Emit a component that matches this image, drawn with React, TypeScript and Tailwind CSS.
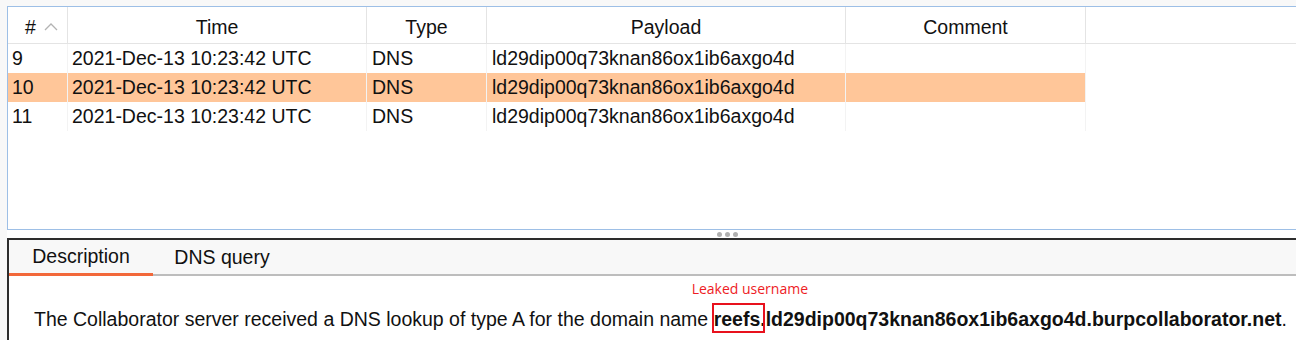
import { useState } from 'react';

type Interaction = {
  id: number;
  time: string;
  type: string;
  payload: string;
  comment: string;
};

const rows: Interaction[] = [
  { id: 9, time: '2021-Dec-13 10:23:42 UTC', type: 'DNS', payload: 'ld29dip00q73knan86ox1ib6axgo4d', comment: '' },
  { id: 10, time: '2021-Dec-13 10:23:42 UTC', type: 'DNS', payload: 'ld29dip00q73knan86ox1ib6axgo4d', comment: '' },
  { id: 11, time: '2021-Dec-13 10:23:42 UTC', type: 'DNS', payload: 'ld29dip00q73knan86ox1ib6axgo4d', comment: '' },
];

const cols = 'grid grid-cols-[60px_299px_120px_359px_240px_1fr]';

function SortChevron() {
  return (
    <svg width="14" height="9" viewBox="0 0 14 9" className="ml-[8px] -mt-[2px]">
      <polyline points="1,8 7,2 13,8" fill="none" stroke="#b3b3b3" strokeWidth="1.3" />
    </svg>
  );
}

function HeaderCell({ children, last }: { children?: React.ReactNode; last?: boolean }) {
  return (
    <div
      className={`flex items-center justify-center h-full pt-[5px] ${last ? '' : 'border-r border-[#e4e4e4]'}`}
    >
      {children}
    </div>
  );
}

export default function App() {
  const [selected, setSelected] = useState(10);
  const [tab, setTab] = useState('Description');

  return (
    <div className="w-[1296px] h-[340px] overflow-hidden bg-[#f8f8f8] pt-[6px] pl-[7px] text-[19.5px] text-[#111] font-['Liberation_Sans',Arial,sans-serif]">
      {/* interactions table */}
      <div className="h-[224px] bg-white border border-r-0 border-[#9dbfe6]">
        <div className={`${cols} h-[37px] border-b border-[#e4e4e4]`}>
          <HeaderCell>
            <span className="pl-[8px]">#</span>
            <SortChevron />
          </HeaderCell>
          <HeaderCell>Time</HeaderCell>
          <HeaderCell>Type</HeaderCell>
          <HeaderCell>Payload</HeaderCell>
          <HeaderCell>Comment</HeaderCell>
          <HeaderCell last />
        </div>
        {rows.map((r) => {
          const sel = r.id === selected;
          const cell = `flex items-center h-[29px] border-r border-[#f3f3f3] ${sel ? 'bg-[#ffc699]' : ''}`;
          return (
            <div key={r.id} className={`${cols} cursor-default`} onClick={() => setSelected(r.id)}>
              <div className={`${cell} pl-[4px]`}>{r.id}</div>
              <div className={`${cell} pl-[4px]`}>{r.time}</div>
              <div className={`${cell} pl-[5px]`}>{r.type}</div>
              <div className={`${cell} pl-[5px]`}>{r.payload}</div>
              <div className={`${cell} pl-[5px]`}>{r.comment}</div>
              <div className="h-[29px]" />
            </div>
          );
        })}
      </div>

      {/* split handle */}
      <div className="h-[8px] bg-white flex items-center justify-center gap-[3px] pl-[152px]">
        <span className="w-[5px] h-[5px] rounded-full bg-[#b0b0b0]" />
        <span className="w-[5px] h-[5px] rounded-full bg-[#b0b0b0]" />
        <span className="w-[5px] h-[5px] rounded-full bg-[#b0b0b0]" />
      </div>

      {/* details panel */}
      <div className="h-[102px] border-t-2 border-l-2 border-[#2d2d2d] bg-white">
        <div className="flex h-[36px] bg-[#f8f8f8] border-b-2 border-[#bdbdbd]">
          {['Description', 'DNS query'].map((t) => (
            <button
              key={t}
              onClick={() => setTab(t)}
              className={`h-[36px] -mb-[2px] flex items-center justify-center ${
                t === 'Description' ? 'w-[144px]' : 'w-[138px]'
              } ${tab === t ? 'border-b-[3px] border-[#f2683a]' : ''}`}
            >
              {t}
            </button>
          ))}
        </div>
        <div className="pl-[25px] pt-[31px] leading-[24px] whitespace-nowrap">
          The Collaborator server received a DNS lookup of type A for the domain name{' '}
          <span className="relative font-bold">
            <span className="absolute -left-[2px] -right-[5px] -top-[5px] -bottom-[3px] border-2 border-[#e8111d]" />
            <span className="absolute -top-[28px] -left-[22px] text-[14px] leading-[18px] font-normal text-[#ee1c25] font-['Open_Sans',sans-serif]">
              Leaked username
            </span>
            reefs
          </span>
          <span className="font-bold">.ld29dip00q73knan86ox1ib6axgo4d.burpcollaborator.net</span>.
        </div>
      </div>
    </div>
  );
}
